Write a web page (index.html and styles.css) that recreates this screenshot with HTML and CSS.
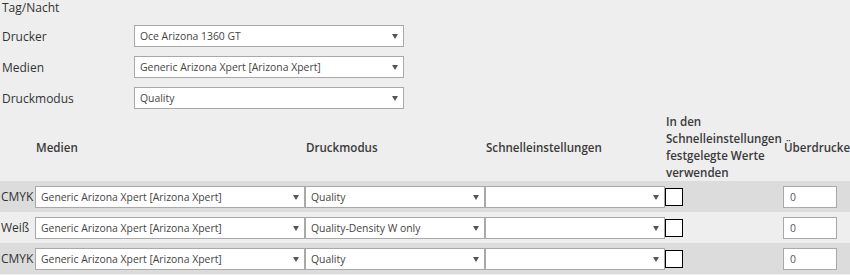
FILE: index.html
```
<!DOCTYPE html>
<html lang="de">
<head>
<meta charset="utf-8">
<title>Tag/Nacht</title>
<link rel="stylesheet" href="styles.css">
</head>
<body>
<div class="page">
  <div class="title">Tag/Nacht</div>
  <div class="form">
    <label class="form-label">Drucker</label>
    <div class="sel sel-wide"><span class="sel-text">Oce Arizona 1360 GT</span></div>
    <label class="form-label">Medien</label>
    <div class="sel sel-wide"><span class="sel-text">Generic Arizona Xpert [Arizona Xpert]</span></div>
    <label class="form-label">Druckmodus</label>
    <div class="sel sel-wide"><span class="sel-text">Quality</span></div>
  </div>

  <table class="grid">
    <colgroup>
      <col class="c-label"><col class="c-media"><col class="c-mode"><col class="c-quick"><col class="c-check"><col class="c-over">
    </colgroup>
    <thead>
      <tr>
        <th></th>
        <th>Medien</th>
        <th>Druckmodus</th>
        <th>Schnelleinstellungen</th>
        <th class="th-wrap">In den Schnelleinstellungen festgelegte Werte verwenden</th>
        <th>Überdrucken</th>
      </tr>
    </thead>
    <tbody>
      <tr class="row-dark">
        <td class="row-label">CMYK</td>
        <td><div class="sel"><span class="sel-text">Generic Arizona Xpert [Arizona Xpert]</span></div></td>
        <td><div class="sel"><span class="sel-text">Quality</span></div></td>
        <td><div class="sel"><span class="sel-text"></span></div></td>
        <td><span class="check"></span></td>
        <td><div class="num">0</div></td>
      </tr>
      <tr>
        <td class="row-label">Weiß</td>
        <td><div class="sel"><span class="sel-text">Generic Arizona Xpert [Arizona Xpert]</span></div></td>
        <td><div class="sel"><span class="sel-text">Quality-Density W only</span></div></td>
        <td><div class="sel"><span class="sel-text"></span></div></td>
        <td><span class="check"></span></td>
        <td><div class="num">0</div></td>
      </tr>
      <tr class="row-dark">
        <td class="row-label">CMYK</td>
        <td><div class="sel"><span class="sel-text">Generic Arizona Xpert [Arizona Xpert]</span></div></td>
        <td><div class="sel"><span class="sel-text">Quality</span></div></td>
        <td><div class="sel"><span class="sel-text"></span></div></td>
        <td><span class="check"></span></td>
        <td><div class="num">0</div></td>
      </tr>
    </tbody>
  </table>
</div>
</body>
</html>
```

FILE: styles.css
```
html, body {
  margin: 0;
  padding: 0;
  overflow: hidden;
  background: #eeeeee;
}

body {
  font-family: "Open Sans", "Noto Sans", sans-serif;
  font-size: 12px;
  color: #333333;
}

.page {
  width: 900px;
}

.title {
  padding: 0 0 0 2px;
  height: 15px;
  line-height: 15px;
}

.form {
  display: grid;
  grid-template-columns: 132px 270px;
  grid-auto-rows: 22px;
  row-gap: 9px;
  padding: 10px 0 0 2px;
  align-items: center;
}

.sel {
  position: relative;
  box-sizing: border-box;
  height: 22px;
  border: 1px solid #a9a9a9;
  background: #ffffff;
  display: flex;
  align-items: center;
  padding: 0 18px 0 5px;
  font-size: 10.4px;
  color: #444444;
  white-space: nowrap;
  overflow: hidden;
}

.sel::after {
  content: "";
  position: absolute;
  right: 5px;
  top: 8px;
  border-left: 3px solid transparent;
  border-right: 3px solid transparent;
  border-top: 5px solid #555555;
}

.grid {
  border-collapse: collapse;
  table-layout: fixed;
  width: 900px;
  margin-top: 4px;
}

.c-label { width: 35px; }
.c-media { width: 270px; }
.c-mode { width: 180px; }
.c-quick { width: 180px; }
.c-check { width: 118px; }
.c-over { width: 117px; }

.grid th {
  font-weight: 600;
  font-size: 11.6px;
  text-align: left;
  padding: 0 0 0 1px;
  height: 68px;
  line-height: 17px;
  vertical-align: middle;
  white-space: nowrap;
  color: #3a3a3a;
}

.grid th.th-wrap {
  white-space: normal;
}

.grid td {
  padding: 0;
  height: 31px;
  vertical-align: middle;
}

.row-dark {
  background: #dcdcdc;
}

.grid td.row-label {
  padding-left: 1px;
  white-space: nowrap;
}

.check {
  display: block;
  box-sizing: border-box;
  width: 18px;
  height: 18px;
  border: 1px solid #000000;
  background: #ffffff;
}

.num {
  box-sizing: border-box;
  width: 54px;
  height: 22px;
  border: 1px solid #a9a9a9;
  background: #ffffff;
  padding-left: 6px;
  font-size: 10.4px;
  line-height: 20px;
  color: #555566;
}
```
